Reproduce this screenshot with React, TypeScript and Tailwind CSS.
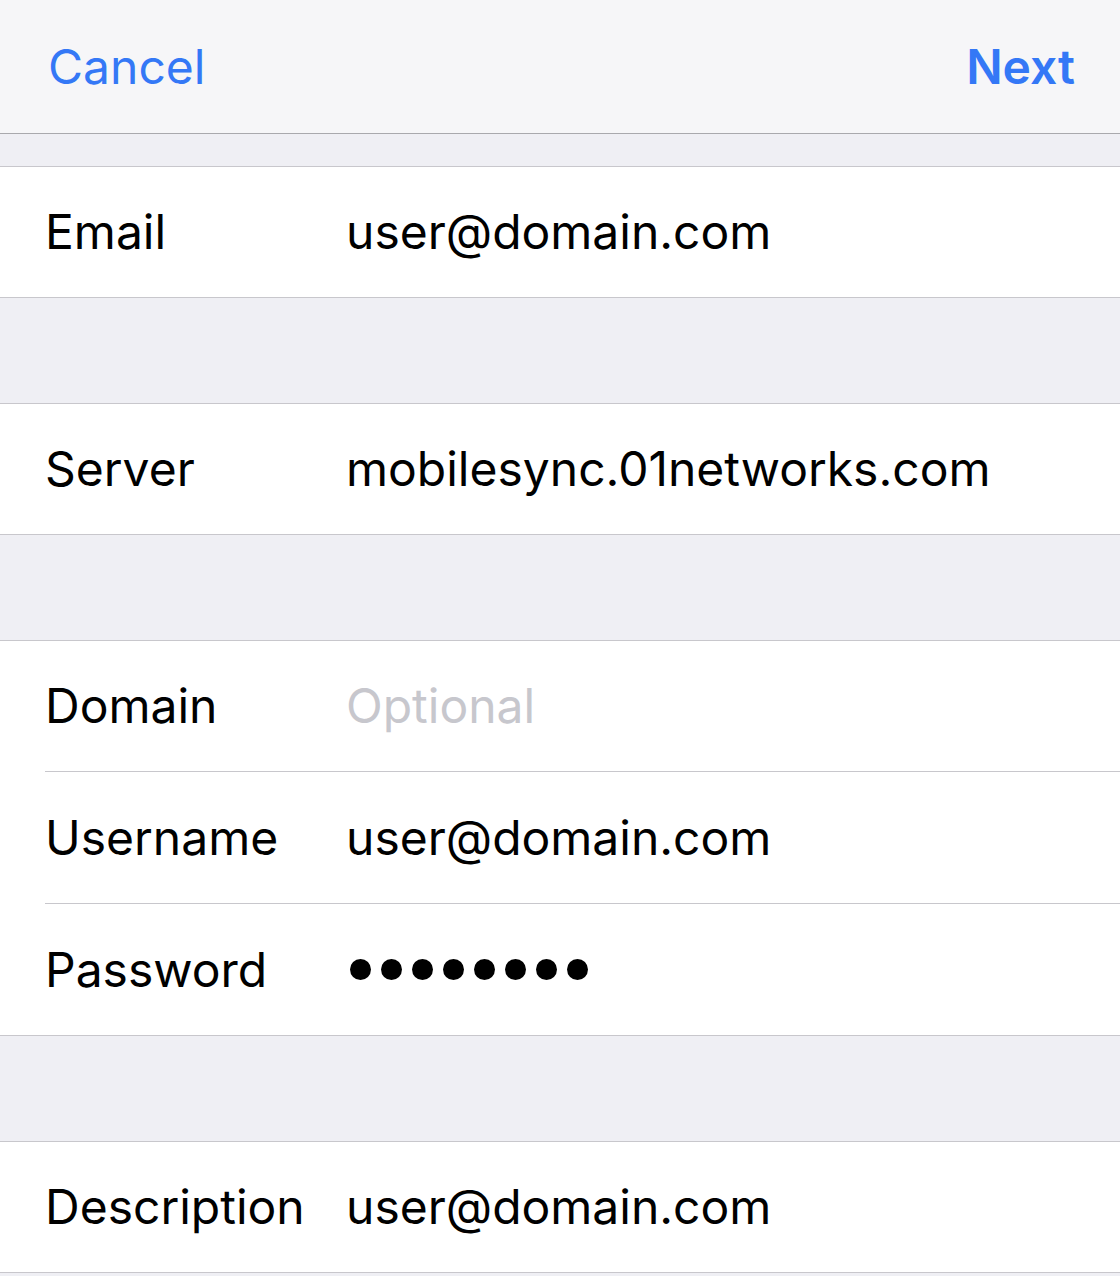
const rows = [
  [{ label: 'Email', value: 'user@domain.com' }],
  [{ label: 'Server', value: 'mobilesync.01networks.com' }],
  [
    { label: 'Domain', value: '', placeholder: 'Optional' },
    { label: 'Username', value: 'user@domain.com' },
    { label: 'Password', value: '', secret: 8 },
  ],
  [{ label: 'Description', value: 'user@domain.com' }],
];

type Field = { label: string; value: string; placeholder?: string; secret?: number };

// row heights follow the screenshot's slightly uneven pixel grid
function rowClass(i: number, count: number) {
  const last = i === count - 1;
  if (last) return count > 1 ? 'h-[131px]' : 'h-[130px]';
  return (i === 0 ? 'h-[131px]' : 'h-[132px]') + ' border-b border-[#c8c7cc]';
}

function Row({ field, cls }: { field: Field; cls: string }) {
  return (
    <div className="pl-[45px] bg-white">
      <div className={'flex items-center ' + cls}>
        <div className="w-[301px] shrink-0 text-black">{field.label}</div>
        {field.secret ? (
          <div className="flex gap-[10px] ml-[4px]">
            {Array.from({ length: field.secret }).map((_, i) => (
              <span key={i} className="w-[21px] h-[21px] rounded-full bg-black" />
            ))}
          </div>
        ) : field.value ? (
          <div className="text-black">{field.value}</div>
        ) : (
          <div className="text-[#c7c7cd]">{field.placeholder}</div>
        )}
      </div>
    </div>
  );
}

export default function App() {
  return (
    <div
      className="w-[1120px] h-[1276px] bg-[#efeff4] overflow-hidden text-[48px]"
      style={{ fontFamily: 'Inter, "Liberation Sans", sans-serif' }}
    >
      {/* Nav bar */}
      <div className="h-[134px] bg-[#f6f6f8] border-b border-[#a9a9ad] flex items-center justify-between pl-[48px] pr-[45px]">
        <span className="text-[#3478f6]">Cancel</span>
        <span className="text-[#3478f6] font-semibold">Next</span>
      </div>

      {rows.map((group, gi) => (
        <div key={gi} className={gi === 0 ? 'mt-[32px]' : 'mt-[105px]'}>
          <div className="border-y border-[#c8c7cc]">
            {group.map((f, i) => (
              <Row key={f.label} field={f} cls={rowClass(i, group.length)} />
            ))}
          </div>
        </div>
      ))}
    </div>
  );
}
